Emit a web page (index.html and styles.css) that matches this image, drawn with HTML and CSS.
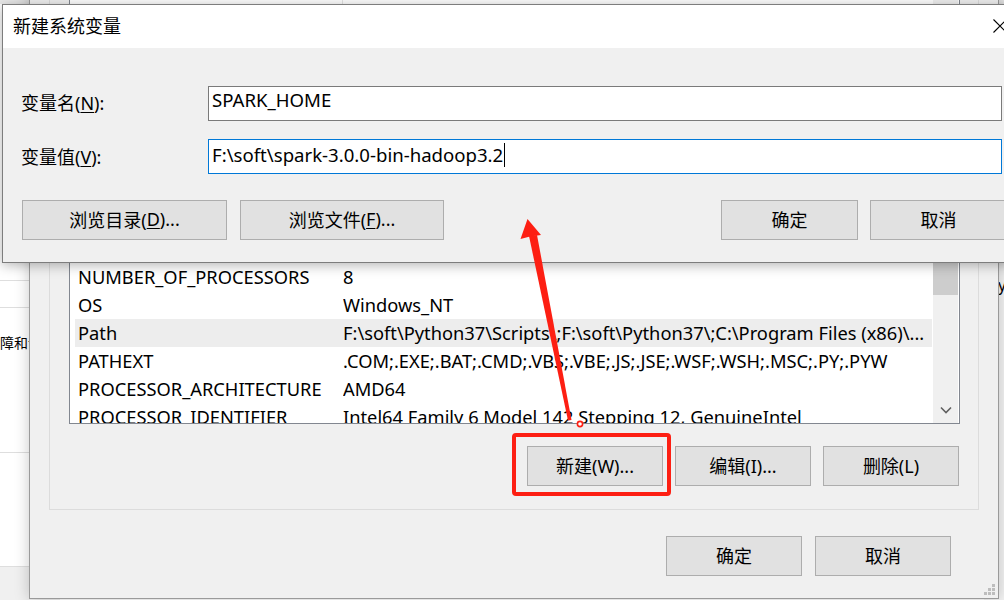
FILE: index.html
```html
<!DOCTYPE html>
<html lang="zh-CN">
<head>
<meta charset="utf-8">
<title>新建系统变量</title>
<link rel="stylesheet" href="styles.css">
</head>
<body>
<div class="backdrop">
  <div class="bd-strip"></div>
  <div class="bd-block bd-b1"></div>
  <div class="bd-block bd-b2"></div>
  <div class="bd-block bd-b3"><span class="bd-text">故障和设置</span></div>
  <div class="bd-block bd-b4"></div>
  <div class="bd-foot"></div>
</div>
<div class="backdrop-right"><span class="br-text">y</span></div>

<div class="env-dialog">
  <div class="group">
    <div class="list">
      <div class="list-main">
        <div class="list-head"><span class="head-cell head-c1"></span><span class="head-cell"></span></div>
        <div class="row"><span class="col1">CLASSPATH</span><span class="col2">.;%JAVA_HOME%\lib</span></div>
        <div class="row"><span class="col1">ComSpec</span><span class="col2">C:\WINDOWS\system32\cmd.exe</span></div>
        <div class="row"><span class="col1">DriverData</span><span class="col2">C:\Windows\System32\Drivers\DriverData</span></div>
        <div class="row"><span class="col1">HADOOP_HOME</span><span class="col2">F:\soft\hadoop-3.2.1</span></div>
        <div class="row"><span class="col1">JAVA_HOME</span><span class="col2">C:\Program Files\Java\jdk1.8.0_251</span></div>
        <div class="row"><span class="col1">M2_HOME</span><span class="col2">F:\soft\apache-maven-3.6.3</span></div>
        <div class="row"><span class="col1">MAVEN_HOME</span><span class="col2">F:\soft\apache-maven-3.6.3</span></div>
        <div class="row"><span class="col1">MYSQL_HOME</span><span class="col2">F:\soft\mysql-8.0.20</span></div>
        <div class="row"><span class="col1">NODE_PATH</span><span class="col2">F:\soft\nodejs\node_global</span></div>
        <div class="row"><span class="col1">NUMBER_OF_PROCESSORS</span><span class="col2">8</span></div>
        <div class="row"><span class="col1">OS</span><span class="col2">Windows_NT</span></div>
        <div class="row row-sel"><span class="col1">Path</span><span class="col2">F:\soft\Python37\Scripts\;F:\soft\Python37\;C:\Program Files (x86)\...</span></div>
        <div class="row"><span class="col1">PATHEXT</span><span class="col2">.COM;.EXE;.BAT;.CMD;.VBS;.VBE;.JS;.JSE;.WSF;.WSH;.MSC;.PY;.PYW</span></div>
        <div class="row"><span class="col1">PROCESSOR_ARCHITECTURE</span><span class="col2">AMD64</span></div>
        <div class="row"><span class="col1">PROCESSOR_IDENTIFIER</span><span class="col2">Intel64 Family 6 Model 142 Stepping 12, GenuineIntel</span></div>
      </div>
      <div class="scrollbar">
        <div class="sb-up"></div>
        <div class="sb-thumb"></div>
        <div class="sb-track"></div>
        <div class="sb-down">
          <svg width="12" height="8" viewBox="0 0 12 8"><path d="M1 1.5 L6 6.5 L11 1.5" fill="none" stroke="#606060" stroke-width="1.6"/></svg>
        </div>
      </div>
    </div>
    <div class="list-actions">
      <button class="btn btn-sm">新建(W)...</button>
      <button class="btn btn-sm">编辑(I)...</button>
      <button class="btn btn-sm">删除(L)</button>
    </div>
  </div>
  <div class="footer">
    <button class="btn btn-sm">确定</button>
    <button class="btn btn-sm">取消</button>
  </div>
  <svg class="grip" width="12" height="12" viewBox="0 0 12 12">
    <g fill="#bdbdbd">
      <rect x="8" y="0" width="3" height="3"/>
      <rect x="4" y="4" width="3" height="3"/><rect x="8" y="4" width="3" height="3"/>
      <rect x="0" y="8" width="3" height="3"/><rect x="4" y="8" width="3" height="3"/><rect x="8" y="8" width="3" height="3"/>
    </g>
  </svg>
</div>

<div class="newvar-dialog">
  <div class="titlebar">
    <span class="title">新建系统变量</span>
    <svg class="close" width="14" height="14" viewBox="0 0 14 14"><path d="M0.5 0.5 L13.5 13.5 M13.5 0.5 L0.5 13.5" stroke="#000" stroke-width="1.1" fill="none"/></svg>
  </div>
  <div class="nv-body">
    <div class="field">
      <label class="field-label">变量名(<u>N</u>):</label>
      <div class="input input-name">SPARK_HOME</div>
    </div>
    <div class="field field-2">
      <label class="field-label field-label-2">变量值(<u>V</u>):</label>
      <div class="input input-focus">F:\soft\spark-3.0.0-bin-hadoop3.2<span class="caret"></span></div>
    </div>
    <div class="nv-actions">
      <button class="btn btn-browse1">浏览目录(<u>D</u>)...</button>
      <button class="btn btn-browse2">浏览文件(<u>F</u>)...</button>
      <div class="nv-right">
        <button class="btn btn-md">确定</button>
        <button class="btn btn-md">取消</button>
      </div>
    </div>
  </div>
</div>

<div class="highlight-box"></div>
<svg class="arrow" width="1004" height="600" viewBox="0 0 1004 600">
  <polygon points="527.5,219 520.5,239 530,236.5 541,235" fill="#fd1f13"/>
  <polygon points="529,236 537,235 571.5,420 568,420.5" fill="#fd1f13"/>
  <circle cx="580" cy="424" r="2.6" fill="#fff" stroke="#fd1f13" stroke-width="1.6"/>
</svg>
</body>
</html>
```

FILE: styles.css
```css
* { box-sizing: border-box; }

html, body {
  margin: 0;
  padding: 0;
}

body {
  width: 1004px;
  height: 600px;
  overflow: hidden;
  position: relative;
  background: #ffffff;
  font-family: "Noto Sans", "Noto Sans CJK SC", sans-serif;
  font-size: 18px;
  color: #000;
}

u { text-decoration: underline; text-underline-offset: 2px; text-decoration-thickness: 1px; }

/* ---------- backdrop window (left) ---------- */
.backdrop {
  position: absolute;
  left: 0;
  top: 0;
  width: 60px;
  height: 600px;
  display: flex;
  flex-direction: column;
  background: #fff;
}
.bd-strip { height: 4px; background: #e9e9e9; flex: none; }
.bd-block { flex: none; border-bottom: 1px solid #dedede; }
.bd-b1 { height: 277px; }
.bd-b2 { height: 27px; }
.bd-b3 { height: 145px; padding-top: 24px; overflow: hidden; }
.bd-b4 { height: 114px; }
.bd-foot { flex: 1; background: #f0f0f0; }
.bd-text { display: block; margin-left: -14px; font-size: 14px; white-space: nowrap; }

.backdrop-right {
  position: absolute;
  right: 0;
  top: 0;
  width: 20px;
  height: 600px;
  background: #f4f4f4;
  padding-top: 274px;
}
.br-text { display: block; margin-left: 14px; font-size: 16px; }

/* ---------- environment variables dialog ---------- */
.env-dialog {
  position: absolute;
  left: 29px;
  top: -100px;
  width: 970px;
  height: 699px;
  background: #f0f0f0;
  border: 1px solid #9a9a9a;
  box-shadow: 0 0 14px rgba(0, 0, 0, 0.22);
  display: flex;
  flex-direction: column;
  justify-content: flex-end;
  padding: 0 19px;
}

.group {
  border: 1px solid #dcdcdc;
  padding: 0 18px 23px 19px;
  display: flex;
  flex-direction: column;
}

.list {
  height: 439px;
  border: 1px solid #828790;
  background: #fff;
  display: flex;
  overflow: hidden;
}
.list-main {
  flex: 1;
  display: flex;
  flex-direction: column;
  overflow: hidden;
}
.list-head {
  flex: none;
  height: 25px;
  display: flex;
  background: #fff;
  border-bottom: 1px solid #e5e5e5;
  padding-left: 5px;
}
.head-cell { display: block; height: 100%; }
.head-c1 { width: 268px; border-right: 1px solid #e5e5e5; }
.row {
  flex: none;
  height: 28px;
  margin: 0 1px 0 5px;
  padding-bottom: 1px;
  display: flex;
  align-items: center;
  white-space: nowrap;
  font-size: 18.3px;
}
.row-sel { background: #ededed; }
.col1 { width: 268px; padding-left: 3px; flex: none; }
.col2 { flex: 1; overflow: hidden; }

.scrollbar {
  flex: none;
  width: 25px;
  margin-right: 1px;
  background: #f0f0f0;
  display: flex;
  flex-direction: column;
}
.sb-up { height: 26px; flex: none; }
.sb-thumb { height: 283px; flex: none; background: #cdcdcd; }
.sb-track { flex: 1; }
.sb-down {
  height: 26px;
  flex: none;
  display: flex;
  align-items: center;
  justify-content: center;
}

.list-actions {
  display: flex;
  justify-content: flex-end;
  gap: 12px;
  margin-top: 22px;
  padding-right: 1px;
}

.footer {
  display: flex;
  justify-content: flex-end;
  gap: 13px;
  margin-top: 26px;
  margin-bottom: 22px;
  padding-right: 28px;
}

.grip {
  position: absolute;
  right: 2px;
  bottom: 2px;
}

/* ---------- buttons ---------- */
.btn {
  height: 40px;
  background: #e1e1e1;
  border: 1px solid #adadad;
  font-family: inherit;
  font-size: 18px;
  color: #000;
  padding: 0 0 2px 0;
  display: flex;
  align-items: center;
  justify-content: center;
  white-space: nowrap;
}
.btn-sm { width: 136px; }
.btn-md { width: 137px; }
.btn-browse1 { width: 205px; }
.btn-browse2 { width: 204px; }

/* ---------- new variable dialog ---------- */
.newvar-dialog {
  position: absolute;
  left: 2px;
  top: 4px;
  width: 1018px;
  height: 259px;
  background: #f0f0f0;
  border: 1px solid #7d7d7d;
  box-shadow: 0 2px 12px rgba(0, 0, 0, 0.3);
  display: flex;
  flex-direction: column;
}
.titlebar {
  height: 43px;
  flex: none;
  background: #fff;
  display: flex;
  align-items: center;
  padding: 0 12px 4px 10px;
}
.title { flex: 1; }
.close { flex: none; margin-top: 2px; }

.nv-body {
  padding: 38px 12px 0 18px;
  display: flex;
  flex-direction: column;
}
.field {
  display: flex;
  align-items: center;
  height: 35px;
}
.field-2 { margin-top: 18px; }
.field-label { width: 187px; flex: none; padding-bottom: 4px; }
.field-label-2 { padding-bottom: 2px; }
.input {
  width: 794px;
  height: 35px;
  background: #fff;
  border: 1px solid #7a7a7a;
  padding: 0 0 4px 3px;
  display: flex;
  align-items: center;
  white-space: nowrap;
  font-size: 18.6px;
}
.input-name { padding-bottom: 8px; }
.input-focus { border-color: #0078d7; }
.caret {
  display: inline-block;
  width: 1px;
  height: 24px;
  background: #000;
  margin-left: 1px;
}

.nv-actions {
  display: flex;
  align-items: center;
  gap: 13px;
  margin-top: 26px;
  padding-left: 1px;
}
.nv-right {
  margin-left: auto;
  display: flex;
  gap: 12px;
}

/* ---------- annotation overlays ---------- */
.highlight-box {
  position: absolute;
  left: 512px;
  top: 433px;
  width: 159px;
  height: 63px;
  border: 4px solid #fd1f13;
  border-radius: 4px;
}
.arrow {
  position: absolute;
  left: 0;
  top: 0;
}
```
